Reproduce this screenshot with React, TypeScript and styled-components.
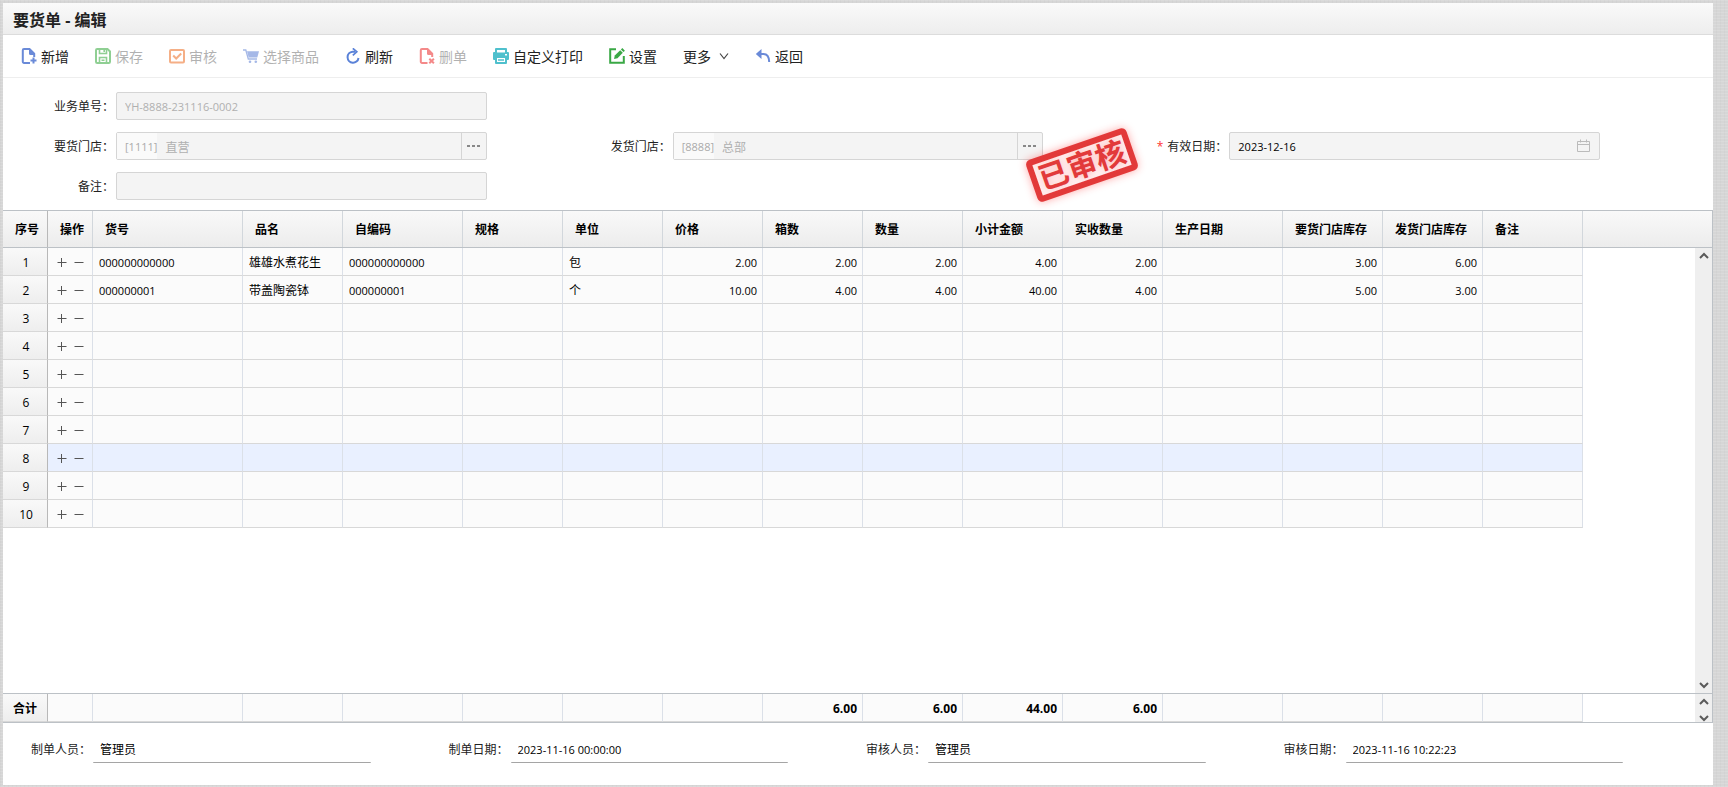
import React, { ReactNode } from 'react';
import styled, { createGlobalStyle, css } from 'styled-components';

const GlobalStyle = createGlobalStyle`
  *, *::before, *::after { box-sizing: border-box; }
  body {
    margin: 0;
    background: #d6d6d6;
    color: #000;
    font: 12px/16px "Open Sans", "Noto Sans CJK SC", sans-serif;
  }
  button, input { font: inherit; color: inherit; }
`;

const Page = styled.div`
  min-height: 100vh;
  padding: 3px 15px 2px 3px;
  display: flex;
  background:
    repeating-linear-gradient(0deg, rgba(255, 255, 255, 0.12) 0 1px, transparent 1px 3px),
    repeating-linear-gradient(90deg, rgba(0, 0, 0, 0.02) 0 1px, transparent 1px 4px),
    #d6d6d6;
`;

const Panel = styled.main`
  flex: 1;
  min-width: 0;
  display: flex;
  flex-direction: column;
  background: #fff;
`;

const TitleBar = styled.header`
  height: 32px;
  padding: 2px 10px 0;
  display: flex;
  align-items: center;
  border-bottom: 1px solid #dcdcdc;
  background: linear-gradient(#fafafa, #ededed);
`;

const Title = styled.h1`
  margin: 0;
  font-size: 16px;
  line-height: 24px;
  font-weight: 700;
  color: #222;
`;

const Toolbar = styled.nav`
  height: 43px;
  padding: 0 18px;
  display: flex;
  align-items: center;
  gap: 26px;
  border-bottom: 1px solid #eee;
`;

const ToolButton = styled.button<{ $gap?: number }>`
  padding: 0;
  border: 0;
  background: none;
  display: flex;
  align-items: center;
  gap: ${(p) => p.$gap ?? 4}px;
  font-size: 14px;
  line-height: 20px;
  white-space: nowrap;
  color: #222;
  & > span { padding-top: 2px; }
  &:disabled { color: #222; opacity: 1; }
  &:disabled > span { opacity: 0.35; }
  &:disabled > svg { opacity: 0.6; }
`;

const Icon = styled.svg`
  display: block;
  flex: none;
`;

const Form = styled.form`
  position: relative;
  height: 132px;
  padding: 14px 40px 0 0;
  display: grid;
  grid-template-columns: repeat(3, 1fr);
  grid-auto-rows: 28px;
  align-content: start;
  row-gap: 12px;
`;

const Field = styled.div<{ $col: number }>`
  grid-column: ${(p) => p.$col};
  padding-right: 73px;
  display: flex;
  align-items: center;
`;

const Label = styled.label`
  width: 113px;
  padding: 2px 2px 0 0;
  flex: none;
  text-align: right;
  white-space: nowrap;
  color: #222;
`;

const Required = styled.span`
  margin-right: 4px;
  color: #f33;
`;

const Box = styled.div`
  flex: 1;
  min-width: 0;
  height: 28px;
  display: flex;
  align-items: center;
  border: 1px solid #d5d5d5;
  border-radius: 2px;
  background: #f4f4f4;
`;

const StoreCode = styled.span`
  align-self: stretch;
  padding: 2px 0 0 8px;
  font-size: 11px;
  line-height: 24px;
  background: #fafafa;
  color: #aaa;
`;

const TextInput = styled.input<{ $dark?: boolean }>`
  flex: 1;
  min-width: 0;
  height: 26px;
  padding: 1px 8px 0;
  border: 0;
  outline: 0;
  background: transparent;
  font-size: 11px;
  color: ${(p) => (p.$dark ? '#000' : '#b0b0b0')};
`;

const StoreInput = styled(TextInput)`
  font-size: 12px;
`;

const BoxButton = styled.button<{ $divider?: boolean }>`
  width: ${(p) => (p.$divider ? 25 : 30)}px;
  height: 26px;
  padding: 0;
  display: flex;
  align-items: center;
  justify-content: center;
  border: 0;
  border-left: ${(p) => (p.$divider ? '1px solid #d5d5d5' : '0')};
  background: none;
`;

const Stamp = styled.div`
  position: absolute;
  top: 65px;
  left: 60%;
  width: 106px;
  height: 44px;
  display: flex;
  align-items: center;
  justify-content: center;
  border: 6px solid #e23a3a;
  border-radius: 5px;
  background: #fff;
  box-shadow: 0 0 9px rgba(255, 40, 40, 0.4), inset 0 0 9px rgba(255, 60, 60, 0.15);
  color: #e23a3a;
  font-size: 30px;
  line-height: 32px;
  font-weight: 700;
  white-space: nowrap;
  text-shadow: 0 0 9px rgba(255, 40, 40, 0.4);
  transform: rotate(-19deg);
`;

const GridPanel = styled.section`
  flex: 1;
  display: flex;
  flex-direction: column;
  border: 1px solid #bcc1c6;
  border-width: 1px 1px 1px 0;
`;

const HeaderStrip = styled.div`
  border-bottom: 1px solid #bcc1c6;
  background: linear-gradient(#f9f9f9, #ececec);
`;

const Body = styled.div`
  flex: 1;
  display: flex;
  justify-content: space-between;
`;

const Totals = styled.div`
  height: 29px;
  display: flex;
  justify-content: space-between;
  border-top: 1px solid #bcc1c6;
`;

const Table = styled.table`
  width: 1580px;
  align-self: flex-start;
  table-layout: fixed;
  border-collapse: separate;
  border-spacing: 0;
`;

const HeadCell = styled.th`
  height: 36px;
  padding: 2px 12px 0;
  border-right: 1px solid #d2d7dc;
  text-align: left;
  white-space: nowrap;
  font-weight: 700;
  &:first-child { border-right-color: #b8b8b8; }
`;

const SeqCell = styled.th`
  height: 28px;
  padding: 2px 0 0 2px;
  border-right: 1px solid #b8b8b8;
  border-bottom: 1px solid #d8d8d8;
  background: linear-gradient(#f9f9f9, #eee);
  text-align: center;
  font-weight: 400;
`;

const numeric = css`
  font-size: 11px;
  text-align: right;
`;

const Cell = styled.td<{ $num?: boolean; $code?: boolean }>`
  height: 28px;
  padding: 2px 5px 0 6px;
  border-right: 1px solid #dbe0e8;
  border-bottom: 1px solid #d8d8d8;
  background: #fbfbfb;
  white-space: nowrap;
  ${(p) => p.$code && css`font-size: 11px;`}
  ${(p) => p.$num && numeric}
`;

const Row = styled.tr<{ $active?: boolean }>`
  ${(p) => p.$active && css`${Cell} { background: #e9f0ff; }`}
`;

const ActionCell = styled(Cell)`
  padding: 0;
`;

const TotalCell = styled(Cell)`
  font-size: 12px;
  font-weight: 700;
`;

const TotalSeq = styled(SeqCell)`
  padding-left: 0;
  font-weight: 700;
`;

const RowActions = styled.div`
  display: flex;
  align-items: center;
  justify-content: center;
  gap: 7px;
`;

const RowButton = styled.button`
  padding: 0;
  border: 0;
  background: none;
`;

const ScrollTrack = styled.div<{ $short?: boolean }>`
  width: 17px;
  padding: ${(p) => (p.$short ? '4px 0 0' : '4px 0')};
  overflow: hidden;
  display: flex;
  flex-direction: column;
  align-items: center;
  justify-content: space-between;
  background: #efefef;
`;

const Signatures = styled.footer`
  height: 62px;
  padding: 12px 40px 0 0;
  display: grid;
  grid-template-columns: repeat(4, 1fr);
`;

const Signature = styled.div`
  height: 28px;
  padding-right: 50px;
  display: flex;
  align-items: center;
`;

const SignLabel = styled(Label)`
  width: 90px;
`;

const SignInput = styled.input<{ $date?: boolean }>`
  flex: 1;
  min-width: 0;
  height: 28px;
  padding: 1px 7px 0;
  border: 0;
  border-bottom: 1px solid #a5a5a5;
  border-radius: 1px;
  outline: 0;
  background: transparent;
  font-size: ${(p) => (p.$date ? 11 : 12)}px;
`;

const FilePlus = () => (
  <Icon width="16" height="16" viewBox="0 0 16 16" fill="none">
    <path d="M9 15H3a1.200 1.200 0 0 1-1.200-1.200V2.200A1.200 1.200 0 0 1 3 1h5.500l4.700 4.700v3.300" stroke="#6a8ad8" strokeWidth="2" />
    <path d="M8 1l6 6H9.500Q8 7 8 5.500z" fill="#6a8ad8" />
    <path d="M12.500 9.500v6M9.500 12.500h6" stroke="#6a8ad8" strokeWidth="2" />
  </Icon>
);

const FileX = () => (
  <Icon width="16" height="16" viewBox="0 0 16 16" fill="none" stroke="#ee3b3b" strokeWidth="2">
    <path d="M8.500 15H3a1.200 1.200 0 0 1-1.200-1.200V2.200A1.200 1.200 0 0 1 3 1h5.500l4.700 4.700v3.300" />
    <path d="M8 1l6 6H9.500Q8 7 8 5.500z" fill="#ee3b3b" stroke="none" />
    <path d="M10.300 10.800l4.600 4.400M14.900 10.800l-4.600 4.400" />
  </Icon>
);

const Save = () => (
  <Icon width="16" height="16" viewBox="0 0 16 16" fill="none" stroke="#45b04c" strokeWidth="2">
    <path d="M1 2.200Q1 1 2.200 1h10.300L15 3.500v10.300q0 1.200-1.200 1.200H2.200Q1 15 1 13.800z" />
    <path d="M4.500 1v4.500h7V1M9.200 1.500v2.500M4.500 15V9.500h7V15M6.500 12.200h3" strokeWidth="1.600" />
  </Icon>
);

const Audit = () => (
  <Icon width="16" height="16" viewBox="0 0 16 16" fill="none" stroke="#ef7b36" strokeWidth="2">
    <rect x="1" y="2" width="14" height="12.500" rx="1" />
    <path d="M4.200 7.500l3 3 5-5" />
  </Icon>
);

const Cart = () => (
  <Icon width="16" height="16" viewBox="0 0 16 16" fill="none">
    <path d="M0 2h2.800l2.500 9H14" stroke="#6a8ad8" strokeWidth="1.300" />
    <path d="M4 3.200h12L14.300 9.500H5.700z" fill="#6a8ad8" />
    <circle cx="7" cy="13.800" r="1.300" fill="#6a8ad8" />
    <circle cx="12.800" cy="13.800" r="1.300" fill="#6a8ad8" />
  </Icon>
);

const Refresh = () => (
  <Icon width="16" height="16" viewBox="0 0 16 16" fill="none" stroke="#5a82d8" strokeWidth="2">
    <path d="M10 3.700H7.500a5.500 5.500 0 1 0 6 6.300" />
    <path d="M7.800 0.300l4 3.500-4 3.600" strokeWidth="1.700" />
  </Icon>
);

const Printer = () => (
  <Icon width="16" height="16" viewBox="0 0 16 16">
    <path fill="#4fc0cd" fillRule="evenodd" d="M3 0h10q1 0 1 1v3h1q1 0 1 1v6q0 1-1 1h-1v3q0 1-1 1H3q-1 0-1-1v-3H1q-1 0-1-1V5q0-1 1-1h1V1q0-1 1-1zM4 2v2.500h8V2zM4 10v4h8v-4zM12 6v1.500h2V6zM5 11.200h6v1.600H5z" />
  </Icon>
);

const Settings = () => (
  <Icon width="16" height="16" viewBox="0 0 16 16" fill="none">
    <path d="M7 1.200H1.200v13.600h13.600V8" stroke="#3aa845" strokeWidth="2" />
    <path d="M5 11l.8-3.500 5.400-5.300 2.600 2.600-5.300 5.400z" fill="#3aa845" />
    <path d="M12.600 .800l2.600 2.600" stroke="#3aa845" strokeWidth="2" />
  </Icon>
);

const Back = () => (
  <Icon width="16" height="16" viewBox="0 0 16 16" fill="none">
    <path d="M5 6h3.500q5.500 0 5.700 8" stroke="#6a8ad8" strokeWidth="2" />
    <path d="M.800 6L6.500 1v10z" fill="#6a8ad8" />
  </Icon>
);

const ChevronDown = () => (
  <Icon width="10" height="8" viewBox="0 0 10 8" fill="none" stroke="#444" strokeWidth="1.200">
    <path d="M1 1.500l4 5 4-5" />
  </Icon>
);

const Dots = () => (
  <Icon width="14" height="4" viewBox="0 0 14 4" fill="#888">
    <path d="M0 1h3v2H0zM5 1h3v2H5zM10 1h3v2h-3z" />
  </Icon>
);

const Calendar = () => (
  <Icon width="14" height="14" viewBox="0 0 14 14" fill="none" stroke="#bbb">
    <path d="M.500 2.500h12v10h-12zM.500 5.500h12M3.500.500v3M9.500.500v3" />
  </Icon>
);

const Plus = () => (
  <Icon width="10" height="10" viewBox="0 0 10 10" stroke="#555">
    <path d="M.500 5.500h9M4.500 1v9" />
  </Icon>
);

const Minus = () => (
  <Icon width="10" height="10" viewBox="0 0 10 10" stroke="#555">
    <path d="M.500 5.500h9" />
  </Icon>
);

const Arrow = ({ up }: { up?: boolean }) => (
  <Icon width="10" height="7" viewBox="0 0 10 7" fill="none" stroke="#5a5a5a" strokeWidth="2">
    <path d={up ? 'M1 6l4-4 4 4' : 'M1 1l4 4 4-4'} />
  </Icon>
);

type Tool = { text: string; icon: ReactNode; disabled?: boolean };

const tools: Tool[] = [
  { text: '新增', icon: <FilePlus /> },
  { text: '保存', icon: <Save />, disabled: true },
  { text: '审核', icon: <Audit />, disabled: true },
  { text: '选择商品', icon: <Cart />, disabled: true },
  { text: '刷新', icon: <Refresh /> },
  { text: '删单', icon: <FileX />, disabled: true },
  { text: '自定义打印', icon: <Printer /> },
  { text: '设置', icon: <Settings /> },
];

type Column = { title: string; width: number; kind?: 'num' | 'code' };

const columns: Column[] = [
  { title: '货号', width: 150, kind: 'code' },
  { title: '品名', width: 100 },
  { title: '自编码', width: 120, kind: 'code' },
  { title: '规格', width: 100 },
  { title: '单位', width: 100 },
  { title: '价格', width: 100, kind: 'num' },
  { title: '箱数', width: 100, kind: 'num' },
  { title: '数量', width: 100, kind: 'num' },
  { title: '小计金额', width: 100, kind: 'num' },
  { title: '实收数量', width: 100, kind: 'num' },
  { title: '生产日期', width: 120 },
  { title: '要货门店库存', width: 100, kind: 'num' },
  { title: '发货门店库存', width: 100, kind: 'num' },
  { title: '备注', width: 100 },
];

const rows: string[][] = [
  ['000000000000', '雄雄水煮花生', '000000000000', '', '包', '2.00', '2.00', '2.00', '4.00', '2.00', '', '3.00', '6.00', ''],
  ['000000001', '带盖陶瓷钵', '000000001', '', '个', '10.00', '4.00', '4.00', '40.00', '4.00', '', '5.00', '3.00', ''],
  ...Array.from({ length: 8 }, () => columns.map(() => '')),
];

const totals = ['', '', '', '', '', '', '6.00', '6.00', '44.00', '6.00', '', '', '', ''];

const signatures = [
  { label: '制单人员', value: '管理员' },
  { label: '制单日期', value: '2023-11-16 00:00:00', date: true },
  { label: '审核人员', value: '管理员' },
  { label: '审核日期', value: '2023-11-16 10:22:23', date: true },
];

const ColumnWidths = () => (
  <colgroup>
    <col width={45} />
    <col width={45} />
    {columns.map((c, i) => <col key={i} width={c.width} />)}
  </colgroup>
);

const StoreField = ({ id, col, label, code, name }: { id: string; col: number; label: string; code: string; name: string }) => (
  <Field $col={col}>
    <Label htmlFor={id}>{label}：</Label>
    <Box>
      <StoreCode>[{code}]</StoreCode>
      <StoreInput id={id} defaultValue={name} readOnly />
      <BoxButton type="button" $divider aria-label={`选择${label}`}><Dots /></BoxButton>
    </Box>
  </Field>
);

export default function App() {
  return (
    <>
      <GlobalStyle />
      <Page>
        <Panel>
          <TitleBar><Title>要货单 - 编辑</Title></TitleBar>
          <Toolbar>
            {tools.map((t) => (
              <ToolButton key={t.text} type="button" disabled={t.disabled}>
                {t.icon}
                <span>{t.text}</span>
              </ToolButton>
            ))}
            <ToolButton type="button" $gap={8}><span>更多</span><ChevronDown /></ToolButton>
            <ToolButton type="button"><Back /><span>返回</span></ToolButton>
          </Toolbar>

          <Form>
            <Field $col={1}>
              <Label htmlFor="order-no">业务单号：</Label>
              <Box><TextInput id="order-no" defaultValue="YH-8888-231116-0002" readOnly /></Box>
            </Field>
            <StoreField id="request-store" col={1} label="要货门店" code="1111" name="直营" />
            <StoreField id="supply-store" col={2} label="发货门店" code="8888" name="总部" />
            <Field $col={3}>
              <Label htmlFor="valid-date"><Required>*</Required>有效日期：</Label>
              <Box>
                <TextInput id="valid-date" $dark defaultValue="2023-12-16" readOnly />
                <BoxButton type="button" aria-label="选择日期"><Calendar /></BoxButton>
              </Box>
            </Field>
            <Field $col={1}>
              <Label htmlFor="remark">备注：</Label>
              <Box><TextInput id="remark" readOnly /></Box>
            </Field>
            <Stamp>已审核</Stamp>
          </Form>

          <GridPanel>
            <HeaderStrip>
              <Table>
                <ColumnWidths />
                <thead>
                  <tr>
                    <HeadCell>序号</HeadCell>
                    <HeadCell>操作</HeadCell>
                    {columns.map((c, i) => <HeadCell key={i}>{c.title}</HeadCell>)}
                  </tr>
                </thead>
              </Table>
            </HeaderStrip>
            <Body>
              <Table>
                <ColumnWidths />
                <tbody>
                  {rows.map((row, r) => (
                    <Row key={r} $active={r === 7}>
                      <SeqCell scope="row">{r + 1}</SeqCell>
                      <ActionCell>
                        <RowActions>
                          <RowButton type="button" aria-label="插入行"><Plus /></RowButton>
                          <RowButton type="button" aria-label="删除行"><Minus /></RowButton>
                        </RowActions>
                      </ActionCell>
                      {row.map((v, c) => (
                        <Cell key={c} $num={columns[c].kind === 'num'} $code={columns[c].kind === 'code'}>{v}</Cell>
                      ))}
                    </Row>
                  ))}
                </tbody>
              </Table>
              <ScrollTrack><Arrow up /><Arrow /></ScrollTrack>
            </Body>
            <Totals>
              <Table>
                <ColumnWidths />
                <tbody>
                  <tr>
                    <TotalSeq scope="row">合计</TotalSeq>
                    <TotalCell />
                    {totals.map((v, c) => <TotalCell key={c} $num>{v}</TotalCell>)}
                  </tr>
                </tbody>
              </Table>
              <ScrollTrack $short><Arrow up /><Arrow /></ScrollTrack>
            </Totals>
          </GridPanel>

          <Signatures>
            {signatures.map((s, i) => (
              <Signature key={i}>
                <SignLabel htmlFor={`sign-${i}`}>{s.label}：</SignLabel>
                <SignInput id={`sign-${i}`} $date={s.date} defaultValue={s.value} readOnly />
              </Signature>
            ))}
          </Signatures>
        </Panel>
      </Page>
    </>
  );
}
